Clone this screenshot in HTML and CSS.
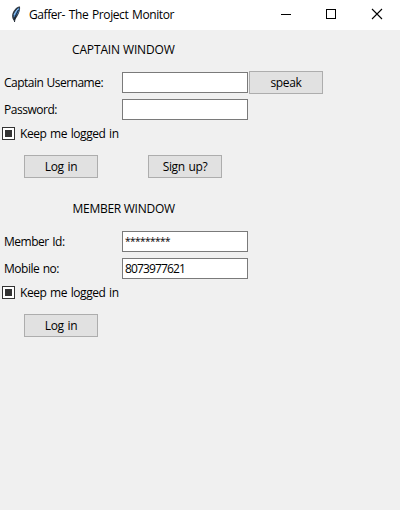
FILE: index.html
```html
<!DOCTYPE html>
<html lang="en">
<head>
<meta charset="utf-8">
<title>Gaffer- The Project Monitor</title>
<link rel="stylesheet" href="styles.css">
</head>
<body>
<header class="titlebar">
  <svg class="feather" width="16" height="20" viewBox="0 0 16 20">
    <path d="M5 16 C2.500 13 2.500 9 5 5.500 C7 2.500 9.500 1 11 1.500 C11.500 4 10.500 8 8.500 11 C7.500 13 6.500 14 5 16Z" fill="#303943"/>
    <path d="M4.800 12.500 C4 9.500 6.500 5.500 10 2.500 C11 5.500 9 10 4.800 12.500Z" fill="#4b8bd0"/>
    <path d="M5 10 Q6.500 6.500 9 3.800" fill="none" stroke="#9bcaf2" stroke-width="1"/>
    <path d="M5.500 17 Q5 12 9.500 5" fill="none" stroke="#17202a" stroke-width="1"/>
  </svg>
  <h1 class="title">Gaffer- The Project Monitor</h1>
  <div class="controls">
    <svg width="45" height="30" shape-rendering="crispEdges"><path d="M16 14.500H26" stroke="#000"/></svg>
    <svg width="45" height="30" shape-rendering="crispEdges"><rect x="16.500" y="9.500" width="9" height="9" fill="none" stroke="#000"/></svg>
    <svg width="45" height="30"><path d="M17 9L27 19M27 9L17 19" stroke="#000" stroke-width="1.100"/></svg>
  </div>
</header>
<main>
  <section class="form">
    <h2 class="heading captain">CAPTAIN WINDOW</h2>
    <div class="row"><label class="label username" for="user">Captain Username:</label><input class="entry" id="user" type="text"><button class="button speak">speak</button></div>
    <div class="row"><label class="label password" for="pass">Password:</label><input class="entry" id="pass" type="text"></div>
    <label class="check"><span class="box"></span><span>Keep me logged in</span></label>
    <div class="actions"><button class="button">Log in</button><button class="button">Sign up?</button></div>
  </section>
  <section class="form">
    <h2 class="heading member">MEMBER WINDOW</h2>
    <div class="row"><label class="label" for="member">Member Id:</label><input class="entry stars" id="member" type="text" value="*********"></div>
    <div class="row"><label class="label" for="mobile">Mobile no:</label><input class="entry digits" id="mobile" type="text" value="8073977621"></div>
    <label class="check"><span class="box"></span><span>Keep me logged in</span></label>
    <div class="actions"><button class="button">Log in</button></div>
  </section>
</main>
</body>
</html>
```
FILE: styles.css
```css
* { box-sizing: border-box; }
body {
  margin: 0;
  height: 510px;
  overflow: hidden;
  background: #f0f0f0;
  color: #000;
  font: 12px/16px "Open Sans", "Noto Sans", sans-serif;
  white-space: nowrap;
}
h1, h2 { margin: 0; font: inherit; }
.titlebar { display: flex; align-items: center; height: 30px; background: #fff; }
.feather { margin-left: 9px; margin-top: -1px; flex: none; }
.title { margin-left: 4px; letter-spacing: -0.42px; word-spacing: 1.1px; }
.controls { display: flex; margin-left: auto; }
.controls svg { display: block; }
.form { height: 159px; }
.heading { height: 39px; padding-top: 12px; }
.captain { padding-left: 72px; letter-spacing: -0.14px; }
.member { padding-left: 72.5px; letter-spacing: -0.27px; }
.row { display: flex; align-items: center; height: 27px; padding-left: 4px; }
.label { width: 118px; letter-spacing: -0.47px; word-spacing: 0.7px; }
.username { letter-spacing: -0.52px; }
.entry {
  width: 126px;
  height: 21px;
  margin: 0;
  padding: 0 2px;
  border: 1px solid #7a7a7a;
  border-radius: 0;
  background: #fff;
  color: #000;
  font: inherit;
  outline: none;
}
.stars { padding-bottom: 2px; font-size: 10px; letter-spacing: -0.51px; }
.digits { letter-spacing: -0.87px; }
.button {
  width: 74px;
  height: 23px;
  padding: 0;
  border: 1px solid #adadad;
  border-radius: 0;
  background: #e1e1e1;
  color: #000;
  font: inherit;
  letter-spacing: -0.35px;
  word-spacing: 1px;
}
.speak { margin-left: 1px; }
.check { display: flex; align-items: center; height: 21px; padding-left: 2px; gap: 5px; letter-spacing: -0.46px; word-spacing: 1.1px; }
.box { width: 13px; height: 13px; border: 1px solid #333; background: #333; box-shadow: inset 0 0 0 2px #fff; }
.actions { display: flex; gap: 50px; padding: 11px 0 0 24px; }
```
